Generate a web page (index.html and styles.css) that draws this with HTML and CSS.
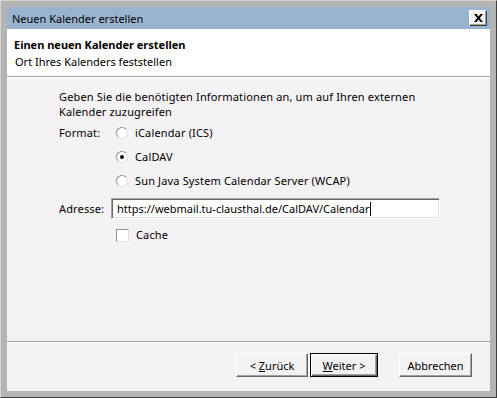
FILE: index.html
```html
<!DOCTYPE html>
<html lang="de">
<head>
    <meta charset="UTF-8">
    <title>Neuen Kalender erstellen</title>
    <link rel="stylesheet" href="styles.css">
</head>
<body>
    <div class="window">
        <div class="titlebar">
            <span class="title">Neuen Kalender erstellen</span>
            <button class="close-btn" aria-label="Schließen">
                <svg width="9" height="8" viewBox="0 0 9 8">
                    <path d="M0 0h2.5l2 2.6L6.5 0H9L5.8 4 9 8H6.5l-2-2.6L2.5 8H0l3.2-4z" fill="#000"/>
                </svg>
            </button>
        </div>

        <div class="wizard-header">
            <div class="wizard-title">Einen neuen Kalender erstellen</div>
            <div class="wizard-subtitle">Ort Ihres Kalenders feststellen</div>
        </div>
        <div class="separator"></div>

        <div class="wizard-body">
            <p class="intro">Geben Sie die benötigten Informationen an, um auf Ihren externen Kalender zuzugreifen</p>

            <div class="form-row">
                <span class="label">Format:</span>
                <div class="options">
                    <label class="option"><span class="radio"></span>iCalendar (ICS)</label>
                    <label class="option"><span class="radio checked"></span>CalDAV</label>
                    <label class="option"><span class="radio"></span>Sun Java System Calendar Server (WCAP)</label>
                </div>
            </div>

            <div class="form-row address-row">
                <span class="label">Adresse:</span>
                <div class="textbox">https://webmail.tu-clausthal.de/CalDAV/Calendar<span class="caret"></span></div>
            </div>

            <label class="option cache"><span class="checkbox"></span>Cache</label>
        </div>

        <div class="separator"></div>
        <div class="wizard-footer">
            <button class="btn btn-back">&lt; <u>Z</u>urück</button>
            <button class="btn btn-default"><u>W</u>eiter &gt;</button>
            <button class="btn btn-cancel">Abbrechen</button>
        </div>
    </div>
</body>
</html>
```

FILE: styles.css
```css
* {
    margin: 0;
    padding: 0;
    box-sizing: border-box;
}

body {
    font-family: "Noto Sans", "Open Sans", sans-serif;
    font-size: 11px;
    letter-spacing: 0.15px;
    color: #000;
    background: #b4b4b4;
}

.window {
    width: 497px;
    height: 398px;
    display: flex;
    flex-direction: column;
    background: #b4b4b4;
    border: 1px solid;
    border-color: #d4d4d4 #404040 #404040 #d4d4d4;
    padding: 6px;
}

.titlebar {
    height: 22px;
    background: #99b4d1;
    display: flex;
    align-items: center;
    justify-content: space-between;
    padding: 0 3px 0 5px;
    letter-spacing: 0;
}

.close-btn {
    width: 18px;
    height: 16px;
    display: flex;
    align-items: center;
    justify-content: center;
    background: #f5f2f5;
    border: 1px solid;
    border-color: #fff #404040 #404040 #fff;
    box-shadow: inset -1px -1px #a0a0a0;
}

.wizard-header {
    height: 47px;
    background: #fff;
    padding: 7px 0 0 7px;
}

.wizard-title {
    font-weight: bold;
    line-height: 17px;
    letter-spacing: 0;
}

.wizard-subtitle {
    line-height: 17px;
    padding-left: 1px;
    letter-spacing: 0;
}

.separator {
    height: 2px;
    border-top: 1px solid #a0a0a0;
    border-bottom: 1px solid #fff;
}

.wizard-body {
    flex: 1;
    background: #f5f2f5;
    padding: 11px 0 0 52px;
}

.intro {
    width: 375px;
    line-height: 15px;
}

.form-row {
    display: flex;
    margin-top: 6px;
}

.label {
    width: 52px;
    line-height: 16px;
}

.options {
    display: flex;
    flex-direction: column;
    gap: 8px;
}

.option {
    display: flex;
    align-items: center;
    height: 16px;
    line-height: 16px;
}

.radio {
    width: 12px;
    height: 12px;
    margin: 0 7px 0 5px;
    border-radius: 50%;
    background: #fff;
    border: 1px solid;
    border-color: #909090 #e0e0e0 #e0e0e0 #909090;
    display: flex;
    align-items: center;
    justify-content: center;
}

.radio.checked::after {
    content: "";
    width: 4px;
    height: 4px;
    border-radius: 50%;
    background: #000;
}

.address-row {
    margin-top: 9px;
    align-items: center;
}

.textbox {
    width: 329px;
    height: 21px;
    background: #fff;
    border: 1px solid;
    border-color: #a0a0a0 #fff #fff #a0a0a0;
    box-shadow: inset 1px 1px #696969, inset -1px -1px #e3e3e3;
    padding: 1px 0 0 5px;
    line-height: 16px;
    display: flex;
    align-items: center;
    letter-spacing: 0;
}

.caret {
    width: 1px;
    height: 14px;
    background: #000;
}

.cache {
    margin: 8px 0 0 52px;
}

.checkbox {
    width: 13px;
    height: 13px;
    margin: 0 7px 0 5px;
    background: #fff;
    border: 1px solid;
    border-color: #909090 #e0e0e0 #e0e0e0 #909090;
}

.wizard-footer {
    height: 48px;
    background: #f5f2f5;
    display: flex;
    align-items: flex-start;
    justify-content: flex-end;
    padding: 10px 18px 0 0;
}

.btn {
    height: 24px;
    width: 73px;
    font-family: inherit;
    font-size: 11px;
    background: #f5f2f5;
    border: 1px solid;
    border-color: #fff #696969 #696969 #fff;
    box-shadow: inset -1px -1px #a0a0a0;
}

.btn-back {
    width: 72px;
}

.btn-default {
    width: 68px;
    margin-left: 2px;
    border: 1px solid #000;
    box-shadow: inset 1px 1px #fff, inset -1px -1px #696969, inset -2px -2px #a0a0a0;
}

.btn-cancel {
    margin-left: 21px;
}
```
